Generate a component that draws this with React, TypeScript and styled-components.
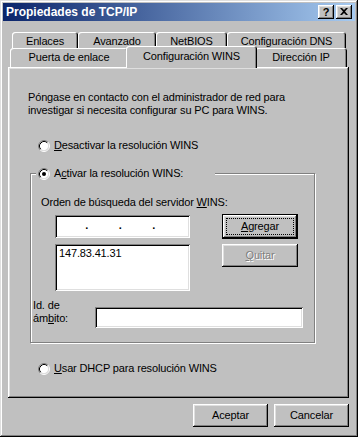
import React from "react";
import styled, { createGlobalStyle } from "styled-components";

const Global = createGlobalStyle`
  html, body { margin: 0; padding: 0; background: #c0c0c0; }
  body {
    font-family: "Liberation Sans", Arial, sans-serif;
    font-size: 11px;
    letter-spacing: -0.15px;
    color: #000;
  }
  * { box-sizing: border-box; }
  u { text-decoration: underline; text-underline-offset: 1px; }
`;

const bevelOut = `inset -1px -1px #000, inset 1px 1px #fff, inset -2px -2px #808080, inset 2px 2px #dfdfdf`;
const bevelIn = `inset 1px 1px #808080, inset -1px -1px #fff, inset 2px 2px #000, inset -2px -2px #dfdfdf`;

const Window = styled.div`
  width: 358px;
  height: 437px;
  background: #c0c0c0;
  padding: 3px;
  box-shadow: inset -1px -1px #000, inset 1px 1px #dfdfdf, inset -2px -2px #808080, inset 2px 2px #fff;
  display: flex;
  flex-direction: column;
`;

const TitleBar = styled.div`
  height: 18px;
  flex: none;
  background: linear-gradient(to right, #0a246a, #a6caf0);
  display: flex;
  align-items: center;
  padding: 0 3px 0 3px;
`;

const TitleText = styled.div`
  flex: 1;
  color: #fff;
  font-weight: bold;
  font-size: 12px;
  letter-spacing: 0;
  line-height: 18px;
  white-space: nowrap;
`;

const TitleButtons = styled.div`
  display: flex;
  gap: 2px;
`;

const TitleButton = styled.div`
  width: 16px;
  height: 14px;
  background: #c0c0c0;
  box-shadow: ${bevelOut};
  display: flex;
  align-items: center;
  justify-content: center;
  font-weight: bold;
  font-size: 11px;
  line-height: 14px;
  padding-bottom: 1px;
`;

const Body = styled.div`
  flex: 1;
  display: flex;
  flex-direction: column;
  padding: 11px 6px 0 5px;
`;

const Tabs = styled.div`
  display: flex;
  flex-direction: column;
`;

const TabRow = styled.div<{ $indent: number; $h: number }>`
  display: flex;
  padding-left: ${(p) => p.$indent}px;
  height: ${(p) => p.$h}px;
  align-items: flex-start;
`;

const Tab = styled.div<{ $w: number; $active?: boolean; $h: number }>`
  width: ${(p) => p.$w + (p.$active ? 4 : 0)}px;
  height: ${(p) => p.$h + (p.$active ? 3 : 0)}px;
  margin: ${(p) => (p.$active ? "-2px -2px -1px -2px" : "0")};
  position: ${(p) => (p.$active ? "relative" : "static")};
  z-index: ${(p) => (p.$active ? 2 : "auto")};
  flex: none;
  background: #c0c0c0;
  border-top-left-radius: 3px;
  border-top-right-radius: 3px;
  box-shadow: inset 1px 1px #fff, inset -1px 0 #000, inset -2px 0 #808080;
  display: flex;
  justify-content: center;
  padding-top: ${(p) => (p.$active ? 4 : 3)}px;
  line-height: 13px;
  white-space: nowrap;
`;

const Panel = styled.div`
  height: 331px;
  flex: none;
  background: #c0c0c0;
  box-shadow: ${bevelOut};
  padding: 24px 0 0 20px;
  display: flex;
  flex-direction: column;
`;

const Para = styled.p`
  margin: 0;
  line-height: 13px;
`;

const RadioRow = styled.div<{ $mt: number; $ml?: number }>`
  display: flex;
  align-items: center;
  gap: 4px;
  height: 13px;
  line-height: 13px;
  margin-top: ${(p) => p.$mt}px;
  margin-left: ${(p) => p.$ml ?? 10}px;
  white-space: nowrap;
`;

const Group = styled.fieldset`
  margin: 15px 0 0 2px;
  width: 285px;
  padding: 0;
  min-width: 0;
  border: 1px solid #808080;
  box-shadow: inset 1px 1px #fff, 1px 1px #fff;
`;

const Legend = styled.legend`
  padding: 0 0 0 2px;
  margin-left: 5px;
  width: 179px;
  height: 13px;
  background: #c0c0c0;
`;

const GroupBody = styled.div`
  padding: 16px 0 14px 2px;
  display: flex;
  flex-direction: column;
`;

const Label = styled.div<{ $ml?: number }>`
  line-height: 13px;
  margin-left: ${(p) => p.$ml ?? 0}px;
  white-space: nowrap;
`;

const ServerGrid = styled.div`
  display: grid;
  grid-template-columns: 135px 76px;
  column-gap: 32px;
  row-gap: 5px;
  margin: 5px 0 0 22px;
  align-items: start;
`;

const IpField = styled.div`
  height: 23px;
  margin-top: 1px;
  background: #fff;
  box-shadow: ${bevelIn};
  display: grid;
  grid-template-columns: repeat(3, 33.5px);
  justify-content: start;
  padding: 0 0 4px 15px;
  align-items: center;
`;

const IpDot = styled.span`
  text-align: center;
  font-weight: bold;
`;

const ListBox = styled.div`
  height: 47px;
  background: #fff;
  box-shadow: ${bevelIn};
  padding: 3px 4px;
  line-height: 13px;
`;

const Button = styled.div<{ $default?: boolean; $disabled?: boolean; $w?: number; $h?: number }>`
  width: ${(p) => p.$w ?? 76}px;
  height: ${(p) => p.$h ?? 23}px;
  background: #c0c0c0;
  box-shadow: ${(p) =>
    p.$default
      ? "inset 0 0 0 1px #000, inset -2px -2px #000, inset 2px 2px #fff, inset -3px -3px #808080, inset 3px 3px #dfdfdf"
      : bevelOut};
  display: flex;
  align-items: center;
  justify-content: center;
  padding: ${(p) => (p.$default ? "4px" : "0")};
  color: ${(p) => (p.$disabled ? "#808080" : "#000")};
  text-shadow: ${(p) => (p.$disabled ? "1px 1px #fff" : "none")};
  line-height: 13px;
`;

const Focus = styled.span`
  flex: 1;
  align-self: stretch;
  display: flex;
  align-items: center;
  justify-content: center;
  border: 1px dotted #000;
`;

const ScopeRow = styled.div`
  display: flex;
  align-items: flex-start;
  margin-top: 8px;
`;

const ScopeLabel = styled.div`
  width: 62px;
  line-height: 13px;
`;

const TextField = styled.div`
  width: 208px;
  height: 21px;
  margin-top: 8px;
  background: #fff;
  box-shadow: ${bevelIn};
`;

const Footer = styled.div`
  display: flex;
  justify-content: flex-end;
  gap: 6px;
  margin-top: 6px;
`;

const Radio: React.FC<{ checked?: boolean }> = ({ checked }) => (
  <svg width="12" height="12" viewBox="0 0 12 12" style={{ flex: "none" }}>
    <circle cx="6" cy="6" r="4.5" fill="#fff" />
    <path d="M2.11 9.89 A5.5 5.5 0 0 1 9.89 2.11" fill="none" stroke="#808080" strokeWidth="1" />
    <path d="M9.89 2.11 A5.5 5.5 0 0 1 2.11 9.89" fill="none" stroke="#fff" strokeWidth="1" />
    <path d="M2.82 9.18 A4.5 4.5 0 0 1 9.18 2.82" fill="none" stroke="#000" strokeWidth="1" />
    <path d="M9.18 2.82 A4.5 4.5 0 0 1 2.82 9.18" fill="none" stroke="#dfdfdf" strokeWidth="1" />
    {checked && <circle cx="6" cy="6" r="2" fill="#000" />}
  </svg>
);

const CloseGlyph = () => (
  <svg width="8" height="7" viewBox="0 0 8 7">
    <path d="M0 0h2l2 2 2-2h2L5 3.5 8 7H6L4 5 2 7H0l3-3.5z" fill="#000" />
  </svg>
);

export default function App() {
  return (
    <>
      <Global />
      <Window>
        <TitleBar>
          <TitleText>Propiedades de TCP/IP</TitleText>
          <TitleButtons>
            <TitleButton>?</TitleButton>
            <TitleButton>
              <CloseGlyph />
            </TitleButton>
          </TitleButtons>
        </TitleBar>
        <Body>
          <Tabs>
            <TabRow $indent={4} $h={16}>
              <Tab $w={66} $h={17}>Enlaces</Tab>
              <Tab $w={78} $h={17}>Avanzado</Tab>
              <Tab $w={71} $h={17}>NetBIOS</Tab>
              <Tab $w={119} $h={17}>Configuración DNS</Tab>
            </TabRow>
            <TabRow $indent={2} $h={19}>
              <Tab $w={118} $h={19}>Puerta de enlace</Tab>
              <Tab $w={127} $h={19} $active>
                Configuración WINS
              </Tab>
              <Tab $w={92} $h={19}>Dirección IP</Tab>
            </TabRow>
          </Tabs>
          <Panel>
            <Para>
              Póngase en contacto con el administrador de red para
              <br />
              investigar si necesita configurar su PC para WINS.
            </Para>
            <RadioRow $mt={22}>
              <Radio />
              <span>
                <u>D</u>esactivar la resolución WINS
              </span>
            </RadioRow>
            <Group>
              <Legend>
                <RadioRow $mt={0} $ml={0}>
                  <Radio checked />
                  <span>
                    A<u>c</u>tivar la resolución WINS:
                  </span>
                </RadioRow>
              </Legend>
              <GroupBody>
                <Label $ml={8}>
                  Orden de búsqueda del servidor <u>W</u>INS:
                </Label>
                <ServerGrid>
                  <IpField>
                    <IpDot>.</IpDot>
                    <IpDot>.</IpDot>
                    <IpDot>.</IpDot>
                  </IpField>
                  <Button $default $h={25}>
                    <Focus>
                      <span>
                        <u>A</u>gregar
                      </span>
                    </Focus>
                  </Button>
                  <ListBox>147.83.41.31</ListBox>
                  <Button $disabled>
                    <span>
                      <u>Q</u>uitar
                    </span>
                  </Button>
                </ServerGrid>
                <ScopeRow>
                  <ScopeLabel>
                    Id. de
                    <br />
                    ám<u>b</u>ito:
                  </ScopeLabel>
                  <TextField />
                </ScopeRow>
              </GroupBody>
            </Group>
            <RadioRow $mt={19}>
              <Radio />
              <span>
                <u>U</u>sar DHCP para resolución WINS
              </span>
            </RadioRow>
          </Panel>
          <Footer>
            <Button $w={75}>Aceptar</Button>
            <Button $w={75}>Cancelar</Button>
          </Footer>
        </Body>
      </Window>
    </>
  );
}
